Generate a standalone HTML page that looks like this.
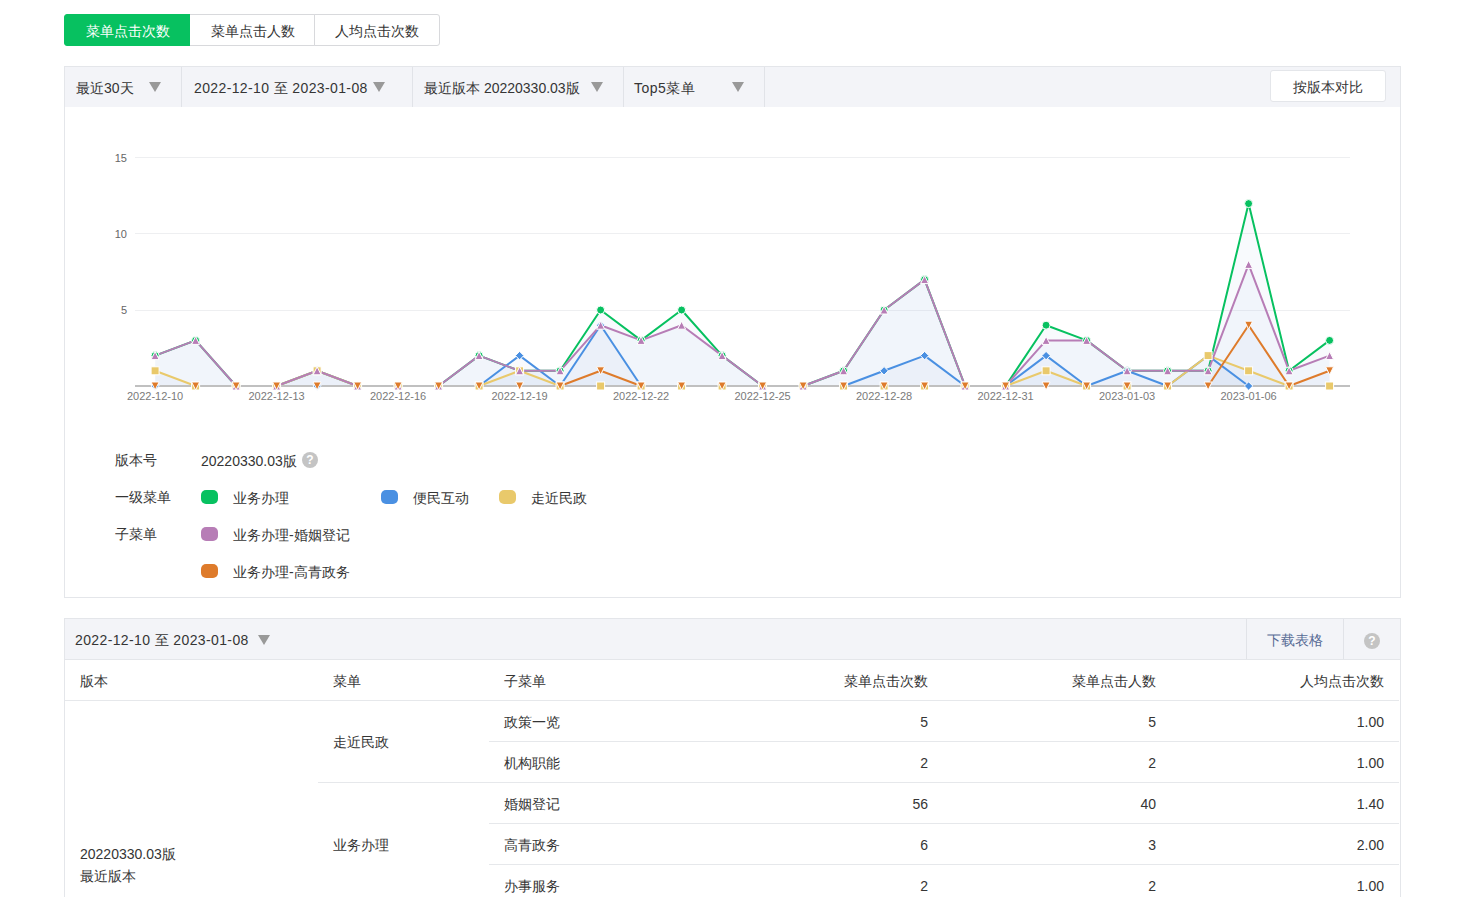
<!DOCTYPE html>
<html><head><meta charset="utf-8">
<style>
*{box-sizing:border-box;margin:0;padding:0}
html,body{width:1460px;height:897px;overflow:hidden;background:#fff}
body{font-family:"Liberation Sans",sans-serif;font-size:14px;color:#353535;position:relative}
.a{position:absolute;white-space:nowrap;line-height:16px}
.tab{position:absolute;top:14px;height:32px;border:1px solid #d8d9dc;background:#fff;font-size:14px;line-height:32px;text-align:center;color:#353535}
.panel{position:absolute;left:64px;width:1337px;border:1px solid #e4e6ea;background:#fff}
.hd{position:absolute;left:0;top:0;width:100%;background:#f3f4f8}
.sep{position:absolute;width:1px;background:#e1e3e8}
.tri{position:absolute;width:0;height:0;border-left:6px solid transparent;border-right:6px solid transparent;border-top:10px solid #999}
.sw{position:absolute;width:17px;height:14px;border-radius:5px}
.q{position:absolute;width:16px;height:16px;border-radius:50%;background:#c4c4c4;color:#fff;font-weight:bold;font-size:12px;line-height:16px;text-align:center}
.hl{position:absolute;height:1px;background:#e6e8eb}
.r{text-align:right}
</style></head><body>
<!-- tabs -->
<div class="tab" style="left:64px;width:127px;background:#07c160;border-color:#07c160;color:#fff;border-radius:3px 0 0 3px">菜单点击次数</div>
<div class="tab" style="left:190px;width:126px;border-left:none">菜单点击人数</div>
<div class="tab" style="left:314px;width:126px;border-radius:0 3px 3px 0">人均点击次数</div>

<!-- chart panel -->
<div class="panel" style="top:66px;height:532px">
  <div class="hd" style="height:40px"></div>
</div>
<div class="sep" style="left:181px;top:67px;height:40px"></div>
<div class="sep" style="left:412px;top:67px;height:40px"></div>
<div class="sep" style="left:623px;top:67px;height:40px"></div>
<div class="sep" style="left:764px;top:67px;height:40px"></div>
<div class="a" style="left:76px;top:80px">最近30天</div>
<div class="tri" style="left:149px;top:82px"></div>
<div class="a" style="left:194px;top:80px;letter-spacing:0.38px">2022-12-10 至 2023-01-08</div>
<div class="tri" style="left:373px;top:82px"></div>
<div class="a" style="left:424px;top:80px">最近版本 20220330.03版</div>
<div class="tri" style="left:591px;top:82px"></div>
<div class="a" style="left:634px;top:80px;letter-spacing:0.5px">Top5菜单</div>
<div class="tri" style="left:732px;top:82px"></div>
<div style="position:absolute;left:1270px;top:70px;width:116px;height:32px;background:#fff;border:1px solid #e4e6ea;border-radius:3px;text-align:center;line-height:32px">按版本对比</div>

<svg width="1460" height="897" style="position:absolute;left:0;top:0">
<rect x="135" y="157.0" width="1215" height="1" fill="#eeeff1"/>
<rect x="135" y="233.0" width="1215" height="1" fill="#eeeff1"/>
<rect x="135" y="310.0" width="1215" height="1" fill="#eeeff1"/>
<polygon points="155.1,386.0 155.1,355.6 195.6,340.4 236.1,386.0 276.6,386.0 317.1,370.8 357.6,386.0 398.1,386.0 438.6,386.0 479.1,355.6 519.6,370.8 560.1,370.8 600.6,310.0 641.1,340.4 681.6,310.0 722.1,355.6 762.6,386.0 803.1,386.0 843.6,370.8 884.1,310.0 924.6,279.6 965.1,386.0 1005.6,386.0 1046.1,325.2 1086.6,340.4 1127.1,370.8 1167.6,370.8 1208.1,370.8 1248.6,203.6 1289.1,370.8 1329.6,340.4 1329.6,386.0" fill="#afc8e8" fill-opacity="0.09"/>
<polygon points="155.1,386.0 155.1,386.0 195.6,386.0 236.1,386.0 276.6,386.0 317.1,386.0 357.6,386.0 398.1,386.0 438.6,386.0 479.1,386.0 519.6,355.6 560.1,386.0 600.6,325.2 641.1,386.0 681.6,386.0 722.1,386.0 762.6,386.0 803.1,386.0 843.6,386.0 884.1,370.8 924.6,355.6 965.1,386.0 1005.6,386.0 1046.1,355.6 1086.6,386.0 1127.1,370.8 1167.6,386.0 1208.1,355.6 1248.6,386.0 1289.1,386.0 1329.6,386.0 1329.6,386.0" fill="#afc8e8" fill-opacity="0.09"/>
<polygon points="155.1,386.0 155.1,370.8 195.6,386.0 236.1,386.0 276.6,386.0 317.1,370.8 357.6,386.0 398.1,386.0 438.6,386.0 479.1,386.0 519.6,370.8 560.1,386.0 600.6,386.0 641.1,386.0 681.6,386.0 722.1,386.0 762.6,386.0 803.1,386.0 843.6,386.0 884.1,386.0 924.6,386.0 965.1,386.0 1005.6,386.0 1046.1,370.8 1086.6,386.0 1127.1,386.0 1167.6,386.0 1208.1,355.6 1248.6,370.8 1289.1,386.0 1329.6,386.0 1329.6,386.0" fill="#afc8e8" fill-opacity="0.09"/>
<polygon points="155.1,386.0 155.1,355.6 195.6,340.4 236.1,386.0 276.6,386.0 317.1,370.8 357.6,386.0 398.1,386.0 438.6,386.0 479.1,355.6 519.6,370.8 560.1,370.8 600.6,325.2 641.1,340.4 681.6,325.2 722.1,355.6 762.6,386.0 803.1,386.0 843.6,370.8 884.1,310.0 924.6,279.6 965.1,386.0 1005.6,386.0 1046.1,340.4 1086.6,340.4 1127.1,370.8 1167.6,370.8 1208.1,370.8 1248.6,264.4 1289.1,370.8 1329.6,355.6 1329.6,386.0" fill="#afc8e8" fill-opacity="0.09"/>
<polygon points="155.1,386.0 155.1,386.0 195.6,386.0 236.1,386.0 276.6,386.0 317.1,386.0 357.6,386.0 398.1,386.0 438.6,386.0 479.1,386.0 519.6,386.0 560.1,386.0 600.6,370.8 641.1,386.0 681.6,386.0 722.1,386.0 762.6,386.0 803.1,386.0 843.6,386.0 884.1,386.0 924.6,386.0 965.1,386.0 1005.6,386.0 1046.1,386.0 1086.6,386.0 1127.1,386.0 1167.6,386.0 1208.1,386.0 1248.6,325.2 1289.1,386.0 1329.6,370.8 1329.6,386.0" fill="#afc8e8" fill-opacity="0.09"/>
<polyline points="155.1,355.6 195.6,340.4 236.1,386.0 276.6,386.0 317.1,370.8 357.6,386.0 398.1,386.0 438.6,386.0 479.1,355.6 519.6,370.8 560.1,370.8 600.6,310.0 641.1,340.4 681.6,310.0 722.1,355.6 762.6,386.0 803.1,386.0 843.6,370.8 884.1,310.0 924.6,279.6 965.1,386.0 1005.6,386.0 1046.1,325.2 1086.6,340.4 1127.1,370.8 1167.6,370.8 1208.1,370.8 1248.6,203.6 1289.1,370.8 1329.6,340.4" fill="none" stroke="#07c160" stroke-width="2" stroke-linejoin="round" stroke-linecap="round"/>
<polyline points="155.1,386.0 195.6,386.0 236.1,386.0 276.6,386.0 317.1,386.0 357.6,386.0 398.1,386.0 438.6,386.0 479.1,386.0 519.6,355.6 560.1,386.0 600.6,325.2 641.1,386.0 681.6,386.0 722.1,386.0 762.6,386.0 803.1,386.0 843.6,386.0 884.1,370.8 924.6,355.6 965.1,386.0 1005.6,386.0 1046.1,355.6 1086.6,386.0 1127.1,370.8 1167.6,386.0 1208.1,355.6 1248.6,386.0 1289.1,386.0 1329.6,386.0" fill="none" stroke="#4a90e2" stroke-width="2" stroke-linejoin="round" stroke-linecap="round"/>
<polyline points="155.1,370.8 195.6,386.0 236.1,386.0 276.6,386.0 317.1,370.8 357.6,386.0 398.1,386.0 438.6,386.0 479.1,386.0 519.6,370.8 560.1,386.0 600.6,386.0 641.1,386.0 681.6,386.0 722.1,386.0 762.6,386.0 803.1,386.0 843.6,386.0 884.1,386.0 924.6,386.0 965.1,386.0 1005.6,386.0 1046.1,370.8 1086.6,386.0 1127.1,386.0 1167.6,386.0 1208.1,355.6 1248.6,370.8 1289.1,386.0 1329.6,386.0" fill="none" stroke="#e9c96b" stroke-width="2" stroke-linejoin="round" stroke-linecap="round"/>
<polyline points="155.1,355.6 195.6,340.4 236.1,386.0 276.6,386.0 317.1,370.8 357.6,386.0 398.1,386.0 438.6,386.0 479.1,355.6 519.6,370.8 560.1,370.8 600.6,325.2 641.1,340.4 681.6,325.2 722.1,355.6 762.6,386.0 803.1,386.0 843.6,370.8 884.1,310.0 924.6,279.6 965.1,386.0 1005.6,386.0 1046.1,340.4 1086.6,340.4 1127.1,370.8 1167.6,370.8 1208.1,370.8 1248.6,264.4 1289.1,370.8 1329.6,355.6" fill="none" stroke="#b77db6" stroke-width="2" stroke-linejoin="round" stroke-linecap="round"/>
<polyline points="155.1,386.0 195.6,386.0 236.1,386.0 276.6,386.0 317.1,386.0 357.6,386.0 398.1,386.0 438.6,386.0 479.1,386.0 519.6,386.0 560.1,386.0 600.6,370.8 641.1,386.0 681.6,386.0 722.1,386.0 762.6,386.0 803.1,386.0 843.6,386.0 884.1,386.0 924.6,386.0 965.1,386.0 1005.6,386.0 1046.1,386.0 1086.6,386.0 1127.1,386.0 1167.6,386.0 1208.1,386.0 1248.6,325.2 1289.1,386.0 1329.6,370.8" fill="none" stroke="#de7b2b" stroke-width="2" stroke-linejoin="round" stroke-linecap="round"/>
<rect x="135" y="385" width="1215" height="2" fill="#c0c0c0"/>
<circle cx="155.1" cy="355.6" r="4" fill="#07c160" stroke="#fff" stroke-width="1"/>
<circle cx="195.6" cy="340.4" r="4" fill="#07c160" stroke="#fff" stroke-width="1"/>
<circle cx="236.1" cy="386.0" r="4" fill="#07c160" stroke="#fff" stroke-width="1"/>
<circle cx="276.6" cy="386.0" r="4" fill="#07c160" stroke="#fff" stroke-width="1"/>
<circle cx="317.1" cy="370.8" r="4" fill="#07c160" stroke="#fff" stroke-width="1"/>
<circle cx="357.6" cy="386.0" r="4" fill="#07c160" stroke="#fff" stroke-width="1"/>
<circle cx="398.1" cy="386.0" r="4" fill="#07c160" stroke="#fff" stroke-width="1"/>
<circle cx="438.6" cy="386.0" r="4" fill="#07c160" stroke="#fff" stroke-width="1"/>
<circle cx="479.1" cy="355.6" r="4" fill="#07c160" stroke="#fff" stroke-width="1"/>
<circle cx="519.6" cy="370.8" r="4" fill="#07c160" stroke="#fff" stroke-width="1"/>
<circle cx="560.1" cy="370.8" r="4" fill="#07c160" stroke="#fff" stroke-width="1"/>
<circle cx="600.6" cy="310.0" r="4" fill="#07c160" stroke="#fff" stroke-width="1"/>
<circle cx="641.1" cy="340.4" r="4" fill="#07c160" stroke="#fff" stroke-width="1"/>
<circle cx="681.6" cy="310.0" r="4" fill="#07c160" stroke="#fff" stroke-width="1"/>
<circle cx="722.1" cy="355.6" r="4" fill="#07c160" stroke="#fff" stroke-width="1"/>
<circle cx="762.6" cy="386.0" r="4" fill="#07c160" stroke="#fff" stroke-width="1"/>
<circle cx="803.1" cy="386.0" r="4" fill="#07c160" stroke="#fff" stroke-width="1"/>
<circle cx="843.6" cy="370.8" r="4" fill="#07c160" stroke="#fff" stroke-width="1"/>
<circle cx="884.1" cy="310.0" r="4" fill="#07c160" stroke="#fff" stroke-width="1"/>
<circle cx="924.6" cy="279.6" r="4" fill="#07c160" stroke="#fff" stroke-width="1"/>
<circle cx="965.1" cy="386.0" r="4" fill="#07c160" stroke="#fff" stroke-width="1"/>
<circle cx="1005.6" cy="386.0" r="4" fill="#07c160" stroke="#fff" stroke-width="1"/>
<circle cx="1046.1" cy="325.2" r="4" fill="#07c160" stroke="#fff" stroke-width="1"/>
<circle cx="1086.6" cy="340.4" r="4" fill="#07c160" stroke="#fff" stroke-width="1"/>
<circle cx="1127.1" cy="370.8" r="4" fill="#07c160" stroke="#fff" stroke-width="1"/>
<circle cx="1167.6" cy="370.8" r="4" fill="#07c160" stroke="#fff" stroke-width="1"/>
<circle cx="1208.1" cy="370.8" r="4" fill="#07c160" stroke="#fff" stroke-width="1"/>
<circle cx="1248.6" cy="203.6" r="4" fill="#07c160" stroke="#fff" stroke-width="1"/>
<circle cx="1289.1" cy="370.8" r="4" fill="#07c160" stroke="#fff" stroke-width="1"/>
<circle cx="1329.6" cy="340.4" r="4" fill="#07c160" stroke="#fff" stroke-width="1"/>
<path d="M155.1 381.8L159.3 386.0L155.1 390.2L150.9 386.0Z" fill="#4a90e2" stroke="#fff" stroke-width="1"/>
<path d="M195.6 381.8L199.8 386.0L195.6 390.2L191.4 386.0Z" fill="#4a90e2" stroke="#fff" stroke-width="1"/>
<path d="M236.1 381.8L240.3 386.0L236.1 390.2L231.9 386.0Z" fill="#4a90e2" stroke="#fff" stroke-width="1"/>
<path d="M276.6 381.8L280.8 386.0L276.6 390.2L272.4 386.0Z" fill="#4a90e2" stroke="#fff" stroke-width="1"/>
<path d="M317.1 381.8L321.3 386.0L317.1 390.2L312.9 386.0Z" fill="#4a90e2" stroke="#fff" stroke-width="1"/>
<path d="M357.6 381.8L361.8 386.0L357.6 390.2L353.4 386.0Z" fill="#4a90e2" stroke="#fff" stroke-width="1"/>
<path d="M398.1 381.8L402.3 386.0L398.1 390.2L393.9 386.0Z" fill="#4a90e2" stroke="#fff" stroke-width="1"/>
<path d="M438.6 381.8L442.8 386.0L438.6 390.2L434.4 386.0Z" fill="#4a90e2" stroke="#fff" stroke-width="1"/>
<path d="M479.1 381.8L483.3 386.0L479.1 390.2L474.9 386.0Z" fill="#4a90e2" stroke="#fff" stroke-width="1"/>
<path d="M519.6 351.4L523.8 355.6L519.6 359.8L515.4 355.6Z" fill="#4a90e2" stroke="#fff" stroke-width="1"/>
<path d="M560.1 381.8L564.3 386.0L560.1 390.2L555.9 386.0Z" fill="#4a90e2" stroke="#fff" stroke-width="1"/>
<path d="M600.6 321.0L604.8 325.2L600.6 329.4L596.4 325.2Z" fill="#4a90e2" stroke="#fff" stroke-width="1"/>
<path d="M641.1 381.8L645.3 386.0L641.1 390.2L636.9 386.0Z" fill="#4a90e2" stroke="#fff" stroke-width="1"/>
<path d="M681.6 381.8L685.8 386.0L681.6 390.2L677.4 386.0Z" fill="#4a90e2" stroke="#fff" stroke-width="1"/>
<path d="M722.1 381.8L726.3 386.0L722.1 390.2L717.9 386.0Z" fill="#4a90e2" stroke="#fff" stroke-width="1"/>
<path d="M762.6 381.8L766.8 386.0L762.6 390.2L758.4 386.0Z" fill="#4a90e2" stroke="#fff" stroke-width="1"/>
<path d="M803.1 381.8L807.3 386.0L803.1 390.2L798.9 386.0Z" fill="#4a90e2" stroke="#fff" stroke-width="1"/>
<path d="M843.6 381.8L847.8 386.0L843.6 390.2L839.4 386.0Z" fill="#4a90e2" stroke="#fff" stroke-width="1"/>
<path d="M884.1 366.6L888.3 370.8L884.1 375.0L879.9 370.8Z" fill="#4a90e2" stroke="#fff" stroke-width="1"/>
<path d="M924.6 351.4L928.8 355.6L924.6 359.8L920.4 355.6Z" fill="#4a90e2" stroke="#fff" stroke-width="1"/>
<path d="M965.1 381.8L969.3 386.0L965.1 390.2L960.9 386.0Z" fill="#4a90e2" stroke="#fff" stroke-width="1"/>
<path d="M1005.6 381.8L1009.8 386.0L1005.6 390.2L1001.4 386.0Z" fill="#4a90e2" stroke="#fff" stroke-width="1"/>
<path d="M1046.1 351.4L1050.3 355.6L1046.1 359.8L1041.9 355.6Z" fill="#4a90e2" stroke="#fff" stroke-width="1"/>
<path d="M1086.6 381.8L1090.8 386.0L1086.6 390.2L1082.4 386.0Z" fill="#4a90e2" stroke="#fff" stroke-width="1"/>
<path d="M1127.1 366.6L1131.3 370.8L1127.1 375.0L1122.9 370.8Z" fill="#4a90e2" stroke="#fff" stroke-width="1"/>
<path d="M1167.6 381.8L1171.8 386.0L1167.6 390.2L1163.4 386.0Z" fill="#4a90e2" stroke="#fff" stroke-width="1"/>
<path d="M1208.1 351.4L1212.3 355.6L1208.1 359.8L1203.9 355.6Z" fill="#4a90e2" stroke="#fff" stroke-width="1"/>
<path d="M1248.6 381.8L1252.8 386.0L1248.6 390.2L1244.4 386.0Z" fill="#4a90e2" stroke="#fff" stroke-width="1"/>
<path d="M1289.1 381.8L1293.3 386.0L1289.1 390.2L1284.9 386.0Z" fill="#4a90e2" stroke="#fff" stroke-width="1"/>
<path d="M1329.6 381.8L1333.8 386.0L1329.6 390.2L1325.4 386.0Z" fill="#4a90e2" stroke="#fff" stroke-width="1"/>
<rect x="151.1" y="366.8" width="8" height="8" fill="#e9c96b" stroke="#fff" stroke-width="1"/>
<rect x="191.6" y="382.0" width="8" height="8" fill="#e9c96b" stroke="#fff" stroke-width="1"/>
<rect x="232.1" y="382.0" width="8" height="8" fill="#e9c96b" stroke="#fff" stroke-width="1"/>
<rect x="272.6" y="382.0" width="8" height="8" fill="#e9c96b" stroke="#fff" stroke-width="1"/>
<rect x="313.1" y="366.8" width="8" height="8" fill="#e9c96b" stroke="#fff" stroke-width="1"/>
<rect x="353.6" y="382.0" width="8" height="8" fill="#e9c96b" stroke="#fff" stroke-width="1"/>
<rect x="394.1" y="382.0" width="8" height="8" fill="#e9c96b" stroke="#fff" stroke-width="1"/>
<rect x="434.6" y="382.0" width="8" height="8" fill="#e9c96b" stroke="#fff" stroke-width="1"/>
<rect x="475.1" y="382.0" width="8" height="8" fill="#e9c96b" stroke="#fff" stroke-width="1"/>
<rect x="515.6" y="366.8" width="8" height="8" fill="#e9c96b" stroke="#fff" stroke-width="1"/>
<rect x="556.1" y="382.0" width="8" height="8" fill="#e9c96b" stroke="#fff" stroke-width="1"/>
<rect x="596.6" y="382.0" width="8" height="8" fill="#e9c96b" stroke="#fff" stroke-width="1"/>
<rect x="637.1" y="382.0" width="8" height="8" fill="#e9c96b" stroke="#fff" stroke-width="1"/>
<rect x="677.6" y="382.0" width="8" height="8" fill="#e9c96b" stroke="#fff" stroke-width="1"/>
<rect x="718.1" y="382.0" width="8" height="8" fill="#e9c96b" stroke="#fff" stroke-width="1"/>
<rect x="758.6" y="382.0" width="8" height="8" fill="#e9c96b" stroke="#fff" stroke-width="1"/>
<rect x="799.1" y="382.0" width="8" height="8" fill="#e9c96b" stroke="#fff" stroke-width="1"/>
<rect x="839.6" y="382.0" width="8" height="8" fill="#e9c96b" stroke="#fff" stroke-width="1"/>
<rect x="880.1" y="382.0" width="8" height="8" fill="#e9c96b" stroke="#fff" stroke-width="1"/>
<rect x="920.6" y="382.0" width="8" height="8" fill="#e9c96b" stroke="#fff" stroke-width="1"/>
<rect x="961.1" y="382.0" width="8" height="8" fill="#e9c96b" stroke="#fff" stroke-width="1"/>
<rect x="1001.6" y="382.0" width="8" height="8" fill="#e9c96b" stroke="#fff" stroke-width="1"/>
<rect x="1042.1" y="366.8" width="8" height="8" fill="#e9c96b" stroke="#fff" stroke-width="1"/>
<rect x="1082.6" y="382.0" width="8" height="8" fill="#e9c96b" stroke="#fff" stroke-width="1"/>
<rect x="1123.1" y="382.0" width="8" height="8" fill="#e9c96b" stroke="#fff" stroke-width="1"/>
<rect x="1163.6" y="382.0" width="8" height="8" fill="#e9c96b" stroke="#fff" stroke-width="1"/>
<rect x="1204.1" y="351.6" width="8" height="8" fill="#e9c96b" stroke="#fff" stroke-width="1"/>
<rect x="1244.6" y="366.8" width="8" height="8" fill="#e9c96b" stroke="#fff" stroke-width="1"/>
<rect x="1285.1" y="382.0" width="8" height="8" fill="#e9c96b" stroke="#fff" stroke-width="1"/>
<rect x="1325.6" y="382.0" width="8" height="8" fill="#e9c96b" stroke="#fff" stroke-width="1"/>
<path d="M155.1 351.6L159.1 359.6L151.1 359.6Z" fill="#b77db6" stroke="#fff" stroke-width="1"/>
<path d="M195.6 336.4L199.6 344.4L191.6 344.4Z" fill="#b77db6" stroke="#fff" stroke-width="1"/>
<path d="M236.1 382.0L240.1 390.0L232.1 390.0Z" fill="#b77db6" stroke="#fff" stroke-width="1"/>
<path d="M276.6 382.0L280.6 390.0L272.6 390.0Z" fill="#b77db6" stroke="#fff" stroke-width="1"/>
<path d="M317.1 366.8L321.1 374.8L313.1 374.8Z" fill="#b77db6" stroke="#fff" stroke-width="1"/>
<path d="M357.6 382.0L361.6 390.0L353.6 390.0Z" fill="#b77db6" stroke="#fff" stroke-width="1"/>
<path d="M398.1 382.0L402.1 390.0L394.1 390.0Z" fill="#b77db6" stroke="#fff" stroke-width="1"/>
<path d="M438.6 382.0L442.6 390.0L434.6 390.0Z" fill="#b77db6" stroke="#fff" stroke-width="1"/>
<path d="M479.1 351.6L483.1 359.6L475.1 359.6Z" fill="#b77db6" stroke="#fff" stroke-width="1"/>
<path d="M519.6 366.8L523.6 374.8L515.6 374.8Z" fill="#b77db6" stroke="#fff" stroke-width="1"/>
<path d="M560.1 366.8L564.1 374.8L556.1 374.8Z" fill="#b77db6" stroke="#fff" stroke-width="1"/>
<path d="M600.6 321.2L604.6 329.2L596.6 329.2Z" fill="#b77db6" stroke="#fff" stroke-width="1"/>
<path d="M641.1 336.4L645.1 344.4L637.1 344.4Z" fill="#b77db6" stroke="#fff" stroke-width="1"/>
<path d="M681.6 321.2L685.6 329.2L677.6 329.2Z" fill="#b77db6" stroke="#fff" stroke-width="1"/>
<path d="M722.1 351.6L726.1 359.6L718.1 359.6Z" fill="#b77db6" stroke="#fff" stroke-width="1"/>
<path d="M762.6 382.0L766.6 390.0L758.6 390.0Z" fill="#b77db6" stroke="#fff" stroke-width="1"/>
<path d="M803.1 382.0L807.1 390.0L799.1 390.0Z" fill="#b77db6" stroke="#fff" stroke-width="1"/>
<path d="M843.6 366.8L847.6 374.8L839.6 374.8Z" fill="#b77db6" stroke="#fff" stroke-width="1"/>
<path d="M884.1 306.0L888.1 314.0L880.1 314.0Z" fill="#b77db6" stroke="#fff" stroke-width="1"/>
<path d="M924.6 275.6L928.6 283.6L920.6 283.6Z" fill="#b77db6" stroke="#fff" stroke-width="1"/>
<path d="M965.1 382.0L969.1 390.0L961.1 390.0Z" fill="#b77db6" stroke="#fff" stroke-width="1"/>
<path d="M1005.6 382.0L1009.6 390.0L1001.6 390.0Z" fill="#b77db6" stroke="#fff" stroke-width="1"/>
<path d="M1046.1 336.4L1050.1 344.4L1042.1 344.4Z" fill="#b77db6" stroke="#fff" stroke-width="1"/>
<path d="M1086.6 336.4L1090.6 344.4L1082.6 344.4Z" fill="#b77db6" stroke="#fff" stroke-width="1"/>
<path d="M1127.1 366.8L1131.1 374.8L1123.1 374.8Z" fill="#b77db6" stroke="#fff" stroke-width="1"/>
<path d="M1167.6 366.8L1171.6 374.8L1163.6 374.8Z" fill="#b77db6" stroke="#fff" stroke-width="1"/>
<path d="M1208.1 366.8L1212.1 374.8L1204.1 374.8Z" fill="#b77db6" stroke="#fff" stroke-width="1"/>
<path d="M1248.6 260.4L1252.6 268.4L1244.6 268.4Z" fill="#b77db6" stroke="#fff" stroke-width="1"/>
<path d="M1289.1 366.8L1293.1 374.8L1285.1 374.8Z" fill="#b77db6" stroke="#fff" stroke-width="1"/>
<path d="M1329.6 351.6L1333.6 359.6L1325.6 359.6Z" fill="#b77db6" stroke="#fff" stroke-width="1"/>
<path d="M151.1 382.0L159.1 382.0L155.1 390.0Z" fill="#de7b2b" stroke="#fff" stroke-width="1"/>
<path d="M191.6 382.0L199.6 382.0L195.6 390.0Z" fill="#de7b2b" stroke="#fff" stroke-width="1"/>
<path d="M232.1 382.0L240.1 382.0L236.1 390.0Z" fill="#de7b2b" stroke="#fff" stroke-width="1"/>
<path d="M272.6 382.0L280.6 382.0L276.6 390.0Z" fill="#de7b2b" stroke="#fff" stroke-width="1"/>
<path d="M313.1 382.0L321.1 382.0L317.1 390.0Z" fill="#de7b2b" stroke="#fff" stroke-width="1"/>
<path d="M353.6 382.0L361.6 382.0L357.6 390.0Z" fill="#de7b2b" stroke="#fff" stroke-width="1"/>
<path d="M394.1 382.0L402.1 382.0L398.1 390.0Z" fill="#de7b2b" stroke="#fff" stroke-width="1"/>
<path d="M434.6 382.0L442.6 382.0L438.6 390.0Z" fill="#de7b2b" stroke="#fff" stroke-width="1"/>
<path d="M475.1 382.0L483.1 382.0L479.1 390.0Z" fill="#de7b2b" stroke="#fff" stroke-width="1"/>
<path d="M515.6 382.0L523.6 382.0L519.6 390.0Z" fill="#de7b2b" stroke="#fff" stroke-width="1"/>
<path d="M556.1 382.0L564.1 382.0L560.1 390.0Z" fill="#de7b2b" stroke="#fff" stroke-width="1"/>
<path d="M596.6 366.8L604.6 366.8L600.6 374.8Z" fill="#de7b2b" stroke="#fff" stroke-width="1"/>
<path d="M637.1 382.0L645.1 382.0L641.1 390.0Z" fill="#de7b2b" stroke="#fff" stroke-width="1"/>
<path d="M677.6 382.0L685.6 382.0L681.6 390.0Z" fill="#de7b2b" stroke="#fff" stroke-width="1"/>
<path d="M718.1 382.0L726.1 382.0L722.1 390.0Z" fill="#de7b2b" stroke="#fff" stroke-width="1"/>
<path d="M758.6 382.0L766.6 382.0L762.6 390.0Z" fill="#de7b2b" stroke="#fff" stroke-width="1"/>
<path d="M799.1 382.0L807.1 382.0L803.1 390.0Z" fill="#de7b2b" stroke="#fff" stroke-width="1"/>
<path d="M839.6 382.0L847.6 382.0L843.6 390.0Z" fill="#de7b2b" stroke="#fff" stroke-width="1"/>
<path d="M880.1 382.0L888.1 382.0L884.1 390.0Z" fill="#de7b2b" stroke="#fff" stroke-width="1"/>
<path d="M920.6 382.0L928.6 382.0L924.6 390.0Z" fill="#de7b2b" stroke="#fff" stroke-width="1"/>
<path d="M961.1 382.0L969.1 382.0L965.1 390.0Z" fill="#de7b2b" stroke="#fff" stroke-width="1"/>
<path d="M1001.6 382.0L1009.6 382.0L1005.6 390.0Z" fill="#de7b2b" stroke="#fff" stroke-width="1"/>
<path d="M1042.1 382.0L1050.1 382.0L1046.1 390.0Z" fill="#de7b2b" stroke="#fff" stroke-width="1"/>
<path d="M1082.6 382.0L1090.6 382.0L1086.6 390.0Z" fill="#de7b2b" stroke="#fff" stroke-width="1"/>
<path d="M1123.1 382.0L1131.1 382.0L1127.1 390.0Z" fill="#de7b2b" stroke="#fff" stroke-width="1"/>
<path d="M1163.6 382.0L1171.6 382.0L1167.6 390.0Z" fill="#de7b2b" stroke="#fff" stroke-width="1"/>
<path d="M1204.1 382.0L1212.1 382.0L1208.1 390.0Z" fill="#de7b2b" stroke="#fff" stroke-width="1"/>
<path d="M1244.6 321.2L1252.6 321.2L1248.6 329.2Z" fill="#de7b2b" stroke="#fff" stroke-width="1"/>
<path d="M1285.1 382.0L1293.1 382.0L1289.1 390.0Z" fill="#de7b2b" stroke="#fff" stroke-width="1"/>
<path d="M1325.6 366.8L1333.6 366.8L1329.6 374.8Z" fill="#de7b2b" stroke="#fff" stroke-width="1"/>
<text x="127" y="161.5" text-anchor="end" font-family="Liberation Sans, sans-serif" font-size="11" fill="#666">15</text>
<text x="127" y="237.5" text-anchor="end" font-family="Liberation Sans, sans-serif" font-size="11" fill="#666">10</text>
<text x="127" y="313.5" text-anchor="end" font-family="Liberation Sans, sans-serif" font-size="11" fill="#666">5</text>
<text x="155.1" y="400" text-anchor="middle" font-family="Liberation Sans, sans-serif" font-size="11" fill="#7a7a7a">2022-12-10</text>
<text x="276.6" y="400" text-anchor="middle" font-family="Liberation Sans, sans-serif" font-size="11" fill="#7a7a7a">2022-12-13</text>
<text x="398.1" y="400" text-anchor="middle" font-family="Liberation Sans, sans-serif" font-size="11" fill="#7a7a7a">2022-12-16</text>
<text x="519.6" y="400" text-anchor="middle" font-family="Liberation Sans, sans-serif" font-size="11" fill="#7a7a7a">2022-12-19</text>
<text x="641.1" y="400" text-anchor="middle" font-family="Liberation Sans, sans-serif" font-size="11" fill="#7a7a7a">2022-12-22</text>
<text x="762.6" y="400" text-anchor="middle" font-family="Liberation Sans, sans-serif" font-size="11" fill="#7a7a7a">2022-12-25</text>
<text x="884.1" y="400" text-anchor="middle" font-family="Liberation Sans, sans-serif" font-size="11" fill="#7a7a7a">2022-12-28</text>
<text x="1005.6" y="400" text-anchor="middle" font-family="Liberation Sans, sans-serif" font-size="11" fill="#7a7a7a">2022-12-31</text>
<text x="1127.1" y="400" text-anchor="middle" font-family="Liberation Sans, sans-serif" font-size="11" fill="#7a7a7a">2023-01-03</text>
<text x="1248.6" y="400" text-anchor="middle" font-family="Liberation Sans, sans-serif" font-size="11" fill="#7a7a7a">2023-01-06</text>
</svg>

<!-- legend -->
<div class="a" style="left:115px;top:452px">版本号</div>
<div class="a" style="left:201px;top:453px">20220330.03版</div>
<div class="q" style="left:302px;top:452px">?</div>
<div class="a" style="left:115px;top:489px">一级菜单</div>
<div class="sw" style="left:201px;top:490px;background:#07c160"></div>
<div class="a" style="left:233px;top:490px">业务办理</div>
<div class="sw" style="left:381px;top:490px;background:#4a90e2"></div>
<div class="a" style="left:413px;top:490px">便民互动</div>
<div class="sw" style="left:499px;top:490px;background:#e9c96b"></div>
<div class="a" style="left:531px;top:490px">走近民政</div>
<div class="a" style="left:115px;top:526px">子菜单</div>
<div class="sw" style="left:201px;top:527px;background:#b77db6"></div>
<div class="a" style="left:233px;top:527px">业务办理-婚姻登记</div>
<div class="sw" style="left:201px;top:564px;background:#de7b2b"></div>
<div class="a" style="left:233px;top:564px">业务办理-高青政务</div>

<!-- table panel -->
<div class="panel" style="top:618px;height:400px">
  <div class="hd" style="height:41px;border-bottom:1px solid #e4e6ea"></div>
</div>
<div class="a" style="left:75px;top:632px;letter-spacing:0.38px">2022-12-10 至 2023-01-08</div>
<div class="tri" style="left:258px;top:635px"></div>
<div class="sep" style="left:1246px;top:619px;height:40px"></div>
<div class="sep" style="left:1343px;top:619px;height:40px"></div>
<div class="a" style="left:1267px;top:632px;color:#576b95">下载表格</div>
<div class="q" style="left:1364px;top:633px">?</div>

<div class="a" style="left:80px;top:673px">版本</div>
<div class="a" style="left:333px;top:673px">菜单</div>
<div class="a" style="left:504px;top:673px">子菜单</div>
<div class="a r" style="right:532px;top:673px">菜单点击次数</div>
<div class="a r" style="right:304px;top:673px">菜单点击人数</div>
<div class="a r" style="right:76px;top:673px">人均点击次数</div>
<div class="hl" style="left:65px;top:700px;width:1334px"></div>
<div class="hl" style="left:489px;top:741px;width:910px"></div>
<div class="hl" style="left:318px;top:782px;width:1081px"></div>
<div class="hl" style="left:489px;top:823px;width:910px"></div>
<div class="hl" style="left:489px;top:864px;width:910px"></div>

<div class="a" style="left:333px;top:734px">走近民政</div>
<div class="a" style="left:333px;top:837px">业务办理</div>
<div class="a" style="left:80px;top:846px">20220330.03版</div>
<div class="a" style="left:80px;top:868px">最近版本</div>

<div class="a" style="left:504px;top:714px">政策一览</div>
<div class="a" style="left:504px;top:755px">机构职能</div>
<div class="a" style="left:504px;top:796px">婚姻登记</div>
<div class="a" style="left:504px;top:837px">高青政务</div>
<div class="a" style="left:504px;top:878px">办事服务</div>

<div class="a r" style="right:532px;top:714px">5</div>
<div class="a r" style="right:304px;top:714px">5</div>
<div class="a r" style="right:76px;top:714px">1.00</div>
<div class="a r" style="right:532px;top:755px">2</div>
<div class="a r" style="right:304px;top:755px">2</div>
<div class="a r" style="right:76px;top:755px">1.00</div>
<div class="a r" style="right:532px;top:796px">56</div>
<div class="a r" style="right:304px;top:796px">40</div>
<div class="a r" style="right:76px;top:796px">1.40</div>
<div class="a r" style="right:532px;top:837px">6</div>
<div class="a r" style="right:304px;top:837px">3</div>
<div class="a r" style="right:76px;top:837px">2.00</div>
<div class="a r" style="right:532px;top:878px">2</div>
<div class="a r" style="right:304px;top:878px">2</div>
<div class="a r" style="right:76px;top:878px">1.00</div>
</body></html>
